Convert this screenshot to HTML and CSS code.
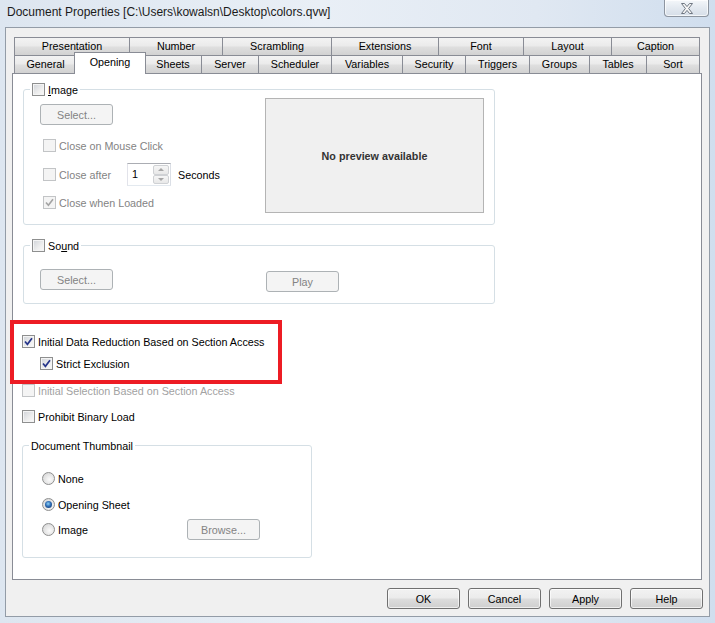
FILE: index.html
```html
<!DOCTYPE html>
<html>
<head>
<meta charset="utf-8">
<title>Document Properties</title>
<link rel="stylesheet" href="styles.css">
</head>
<body>
<div class="titlebar">
  <span class="title">Document Properties [C:\Users\kowalsn\Desktop\colors.qvw]</span>
  <div class="close-btn">
    <svg width="14" height="11" viewBox="0 0 14 11"><path d="M1.5 0.5 L4.5 0.5 L7 3.6 L9.5 0.5 L12.5 0.5 L8.6 5.5 L12.5 10.5 L9.5 10.5 L7 7.4 L4.5 10.5 L1.5 10.5 L5.4 5.5 Z" fill="#f7f7f7" stroke="#6f7782" stroke-width="1"/></svg>
  </div>
</div>
<div class="client">
  <div class="tabs">
    <div class="tabrow row1">
      <div class="tab">Presentation</div>
      <div class="tab">Number</div>
      <div class="tab">Scrambling</div>
      <div class="tab">Extensions</div>
      <div class="tab">Font</div>
      <div class="tab">Layout</div>
      <div class="tab">Caption</div>
    </div>
    <div class="tabrow row2">
      <div class="tab">General</div>
      <div class="tab sel">Opening</div>
      <div class="tab">Sheets</div>
      <div class="tab">Server</div>
      <div class="tab">Scheduler</div>
      <div class="tab">Variables</div>
      <div class="tab">Security</div>
      <div class="tab">Triggers</div>
      <div class="tab">Groups</div>
      <div class="tab">Tables</div>
      <div class="tab">Sort</div>
    </div>
  </div>
  <div class="panel">
    <div class="group img-group">
      <div class="group-title"><span class="cb"></span><span><u>I</u>mage</span></div>
      <div class="gbody">
        <div class="col">
          <button class="btn dis img-select">Select...</button>
          <div class="opt opt1"><span class="cb off"></span><span class="dis-text">Close on Mouse Click</span></div>
          <div class="opt opt2">
            <span class="cb off"></span><span class="dis-text after-label">Close after</span>
            <div class="spin">
              <span class="spin-val">1</span>
              <div class="spin-btns">
                <span class="spin-b"><span class="arr-up"></span></span>
                <span class="spin-b"><span class="arr-dn"></span></span>
              </div>
            </div>
            <span class="seconds">Seconds</span>
          </div>
          <div class="opt opt3"><span class="cb off"><svg viewBox="0 0 11 11" width="11" height="11"><polyline points="2,5.5 4.4,8.3 9,2.2" fill="none" stroke="#a3a3a3" stroke-width="1.6"/></svg></span><span class="dis-text">Close when Loaded</span></div>
        </div>
        <div class="preview">No preview available</div>
      </div>
    </div>

    <div class="group snd-group">
      <div class="group-title"><span class="cb"></span><span>So<u>u</u>nd</span></div>
      <div class="sbody">
        <button class="btn dis snd-select">Select...</button>
        <button class="btn dis play">Play</button>
      </div>
    </div>

    <div class="chk-row row-a"><span class="cb"><svg viewBox="0 0 11 11" width="11" height="11"><polyline points="2,5.5 4.4,8.3 9,2.2" fill="none" stroke="#26358a" stroke-width="1.7"/></svg></span><span>Initial Data Reduction Based on Section Access</span></div>
    <div class="chk-row row-b"><span class="cb"><svg viewBox="0 0 11 11" width="11" height="11"><polyline points="2,5.5 4.4,8.3 9,2.2" fill="none" stroke="#26358a" stroke-width="1.7"/></svg></span><span>Strict Exclusion</span></div>
    <div class="chk-row row-c"><span class="cb off"></span><span class="dis-text light">Initial Selection Based on Section Access</span></div>
    <div class="chk-row row-d"><span class="cb"></span><span>Prohibit Binary Load</span></div>

    <div class="group thumb-group">
      <div class="group-title"><span>Document Thumbnail</span></div>
      <div class="rrow r1"><span class="radio"></span><span>None</span></div>
      <div class="rrow r2"><span class="radio on"></span><span>Opening Sheet</span></div>
      <div class="rrow r3"><span class="radio"></span><span class="rlabel">Image</span><button class="btn dis">Browse...</button></div>
    </div>

    <div class="annot"></div>
  </div>
  <div class="actions">
    <button class="btn">OK</button>
    <button class="btn">Cancel</button>
    <button class="btn">Apply</button>
    <button class="btn">Help</button>
  </div>
</div>
</body>
</html>
```
FILE: styles.css
```css
* { box-sizing: border-box; }
html, body { margin: 0; padding: 0; }
body {
  width: 715px;
  height: 623px;
  overflow: hidden;
  font-family: "Liberation Sans", Arial, sans-serif;
  font-size: 10.75px;
  color: #000;
  background: linear-gradient(90deg, #dde6f0 0%, #e9eff6 45%, #e0e8f2 75%, #d0deee 100%);
}

.titlebar {
  height: 27px;
  display: flex;
  align-items: flex-start;
}
.title {
  font-size: 12px;
  line-height: 15px;
  margin: 5px 0 0 7px;
  color: #1b1b1b;
}
.close-btn {
  margin-left: auto;
  margin-right: 6px;
  width: 45px;
  height: 17px;
  border: 1px solid #8d95a0;
  border-top: none;
  border-radius: 0 0 4px 4px;
  background: linear-gradient(#f4f7fa, #e3e9f0 50%, #d6dee8);
  box-shadow: inset 0 0 0 1px rgba(255,255,255,0.7);
  display: flex;
  align-items: center;
  justify-content: center;
}

.client {
  margin: 0 5px;
  height: 590px;
  border: 1px solid #939ca7;
  background: #f0f0f0;
  display: flex;
  flex-direction: column;
}

.tabs { padding: 9px 9px 0 8px; }
.tabrow { display: grid; height: 18px; }
.row1 { grid-template-columns: 115px 93px 109px 107px 85px 88px 89px; }
.row2 { grid-template-columns: 62px 68px 57px 57px 73px 71px 63px 64px 60px 57px 54px; }
.tab {
  border: 1px solid #898c95;
  border-right: none;
  border-bottom: none;
  background: linear-gradient(#f3f3f3 0%, #ebebeb 45%, #dedede 55%, #d2d2d2 100%);
  text-align: center;
  line-height: 16px;
  white-space: nowrap;
}
.tab:last-child { border-right: 1px solid #898c95; }
.tab.sel {
  position: relative;
  z-index: 2;
  background: #fff;
  border: 1px solid #898c95;
  border-bottom: none;
  margin: -3px -2px -1px -2px;
  padding-top: 1px;
}

.panel {
  position: relative;
  margin: 0 7px 0 6px;
  height: 507px;
  border: 1px solid #898c95;
  background: #fff;
}

/* checkboxes & radios */
.cb {
  flex: none;
  width: 13px;
  height: 13px;
  border: 1px solid #8e8f8f;
  background: linear-gradient(135deg, #d0d3d8 0%, #eeeeee 60%, #fafafa 100%);
  box-shadow: inset 0 0 0 1px #f4f4f4;
  display: flex;
  align-items: center;
  justify-content: center;
}
.cb.off {
  border-color: #c2c4c6;
  background: #f4f4f4;
  box-shadow: none;
}
.radio {
  flex: none;
  width: 13px;
  height: 13px;
  border-radius: 50%;
  border: 1px solid #8e8f8f;
  background: radial-gradient(circle at 60% 60%, #fbfbfb 0%, #e4e4e4 55%, #cfcfcf 100%);
  display: flex;
  align-items: center;
  justify-content: center;
}
.radio.on::after {
  content: "";
  width: 7px;
  height: 7px;
  border-radius: 50%;
  background: radial-gradient(circle at 45% 40%, #8fd3f7 0%, #2f6db5 45%, #0f2f63 100%);
}

.dis-text { color: #838383; }
.dis-text.light { color: #a2a2a2; }

/* buttons */
.btn {
  flex: none;
  width: 73px;
  height: 21px;
  padding: 0;
  font: inherit;
  color: #000;
  border: 1px solid #707070;
  border-radius: 3px;
  background: linear-gradient(#f2f2f2 0%, #ebebeb 48%, #dddddd 52%, #cfcfcf 100%);
  box-shadow: inset 0 0 0 1px rgba(255,255,255,0.65);
  display: flex;
  align-items: center;
  justify-content: center;
}
.btn.dis {
  color: #838383;
  border-color: #adb2b5;
  background: #f4f4f4;
  box-shadow: none;
}

/* group boxes */
.group {
  border: 1px solid #d5dfe5;
  border-radius: 3px;
}
.group-title {
  display: flex;
  align-items: center;
  gap: 3px;
  width: max-content;
  height: 13px;
  margin: -7px 0 0 6px;
  padding: 0 2px;
  background: #fff;
}

.img-group { width: 472px; margin: 15px 0 0 10px; }
.gbody {
  display: flex;
  align-items: flex-start;
  padding: 0 10px 11px 16px;
}
.col { display: flex; flex-direction: column; }
.img-select { margin-top: 8px; }
.opt {
  display: flex;
  align-items: center;
  gap: 3px;
  height: 13px;
  margin-left: 3px;
}
.opt1 { margin-top: 14px; }
.opt2 { margin-top: 11px; height: 23px; }
.opt3 { margin-top: 10px; }
.after-label { width: 65px; }
.seconds { margin-left: 4px; }

.spin {
  width: 44px;
  height: 23px;
  border: 1px solid;
  border-color: #abadb3 #dbdfe6 #e3e9ef #e2e3ea;
  background: #fff;
  display: flex;
}
.spin-val { flex: 1; padding-left: 4px; line-height: 21px; }
.spin-btns {
  width: 17px;
  display: flex;
  flex-direction: column;
  padding: 1px 1px 1px 0;
}
.spin-b {
  flex: 1;
  border: 1px solid #cfd1d4;
  border-radius: 2px;
  background: linear-gradient(#f6f6f6, #e8e8e8);
  display: flex;
  align-items: center;
  justify-content: center;
}
.arr-up, .arr-dn {
  width: 0;
  height: 0;
  border-left: 3px solid transparent;
  border-right: 3px solid transparent;
}
.arr-up { border-bottom: 3px solid #a6a6a6; }
.arr-dn { border-top: 3px solid #a6a6a6; }

.preview {
  margin-left: auto;
  margin-top: 2px;
  width: 219px;
  height: 115px;
  background: #f0f0f0;
  border: 1px solid #b4b4b4;
  display: flex;
  align-items: center;
  justify-content: center;
  font-weight: bold;
  color: #333;
}

.snd-group { width: 472px; margin: 20px 0 0 10px; }
.sbody {
  display: flex;
  align-items: flex-start;
  padding: 0 0 11px 16px;
}
.snd-select { margin-top: 17px; }
.play { margin: 19px 0 0 153px; }

.chk-row {
  display: flex;
  align-items: center;
  gap: 3px;
  height: 13px;
  margin-left: 9px;
}
.row-a { margin-top: 31px; }
.row-b { margin-top: 9px; margin-left: 27px; }
.row-c { margin-top: 14px; }
.row-d { margin-top: 13px; }

.thumb-group { width: 290px; margin: 22px 0 0 9px; padding-bottom: 17px; }
.rrow {
  display: flex;
  align-items: center;
  gap: 3px;
  height: 13px;
  margin-left: 19px;
}
.r1 { margin-top: 20px; }
.r2 { margin-top: 13px; }
.r3 { margin-top: 8px; height: 21px; }
.rlabel { width: 126px; }

.annot {
  position: absolute;
  left: -3px;
  top: 246px;
  width: 272px;
  height: 64px;
  border: 4px solid #ed1c24;
}

.actions {
  display: flex;
  justify-content: flex-end;
  gap: 8px;
  padding: 8px 6px 0 0;
}
```
